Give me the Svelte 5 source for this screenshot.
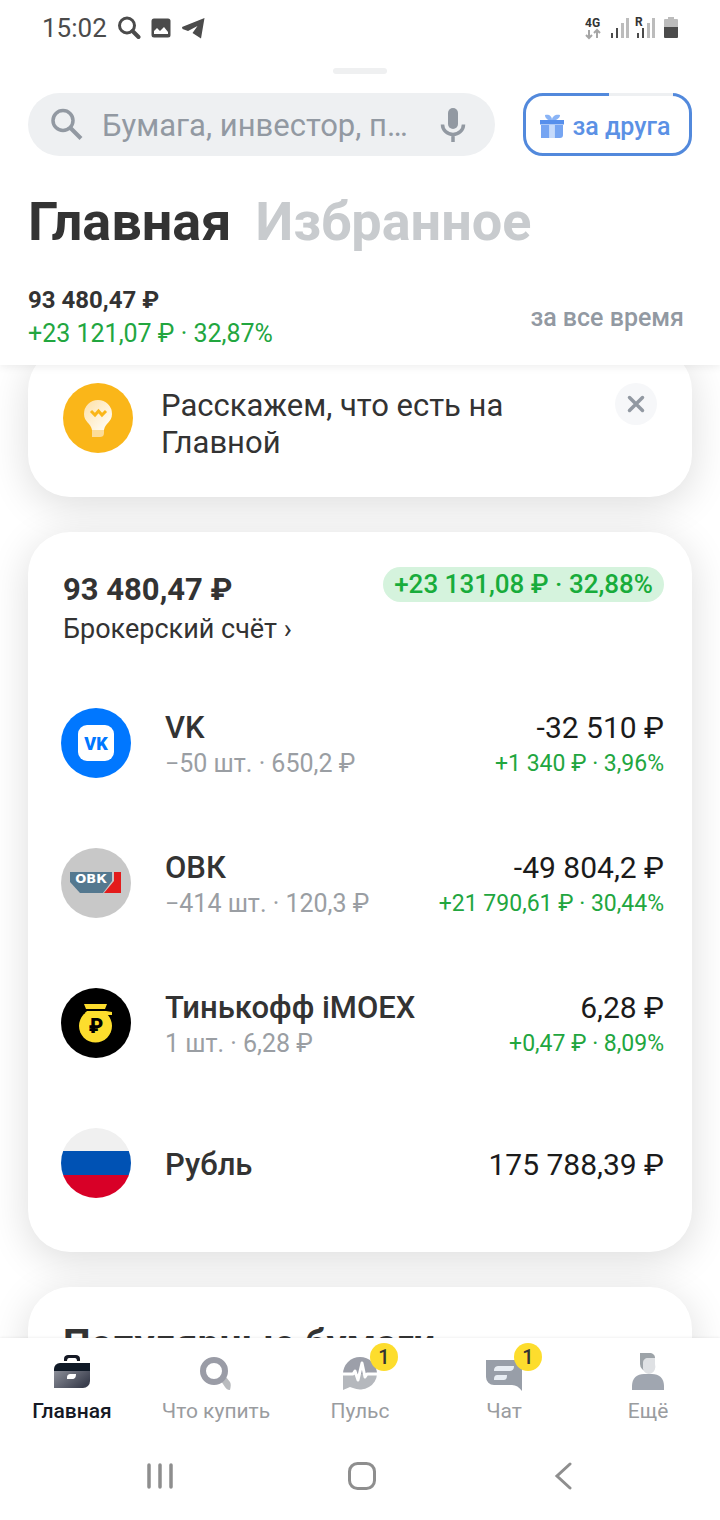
<script>
	let search = $state('');
	let hintOpen = $state(true);
	let activeTab = $state('home');

	const positions = [
		{ id: 'vk', name: 'VK', details: '−50 шт. · 650,2 ₽', value: '-32 510 ₽', profit: '+1 340 ₽ · 3,96%' },
		{ id: 'ovk', name: 'ОВК', details: '−414 шт. · 120,3 ₽', value: '-49 804,2 ₽', profit: '+21 790,61 ₽ · 30,44%' },
		{ id: 'imoex', name: 'Тинькофф iMOEX', details: '1 шт. · 6,28 ₽', value: '6,28 ₽', profit: '+0,47 ₽ · 8,09%' },
		{ id: 'rub', name: 'Рубль', value: '175 788,39 ₽' },
	];

	const tabs = [
		{ id: 'home', label: 'Главная' },
		{ id: 'buy', label: 'Что купить' },
		{ id: 'pulse', label: 'Пульс', badge: 1 },
		{ id: 'chat', label: 'Чат', badge: 1 },
		{ id: 'more', label: 'Ещё' },
	];
</script>

<div class="screen">
	<header>
		<div class="status">
			<time>15:02</time>
			<svg width="24" height="24" viewBox="0 0 24 24" fill="none" stroke="#4b4b4b">
				<circle cx="10" cy="9.500" r="7.500" stroke-width="3" />
				<path d="M15.500 15l6 6" stroke-width="4" stroke-linecap="round" />
			</svg>
			<svg class="picture" width="20" height="20" viewBox="0 0 20 20">
				<rect x="0.500" y="0.500" width="19" height="19" rx="2.500" fill="#4b4b4b" />
				<path d="M3 16v-3l3-3 3 3 4-4 4 5v2z" fill="#fff" />
			</svg>
			<svg class="plane" width="24" height="22" viewBox="0 0 24 22">
				<path d="M1 10 23.500 1 20 21.500l-8.500-5.500 5-7-9.500 5-5.500-2z" fill="#4b4b4b" />
			</svg>
			<span class="spacer"></span>
			<svg width="16" height="24" viewBox="0 0 16 24" fill="none">
				<text x="0" y="11" class="tiny">4G</text>
				<path d="M4 14v8M1 19l3 3 3-3M12 22v-8M9 17l3-3 3 3" stroke="#a6a6a6" stroke-width="2" />
			</svg>
			<svg class="signal" width="19" height="24" viewBox="0 0 19 24">
				<path d="M1 17h2v5H1zM6 12h2v10H6z" fill="#4b4b4b" />
				<path d="M11 7h3v15h-3zM16 2h3v20h-3z" fill="#bcbcbc" />
			</svg>
			<svg class="roaming" width="20" height="24" viewBox="0 0 20 24">
				<text x="0" y="10" class="tiny">R</text>
				<path d="M2 17h2v5H2zM7 12h2v10H7z" fill="#4b4b4b" />
				<path d="M12 7h3v15h-3zM17 2h3v20h-3z" fill="#bcbcbc" />
			</svg>
			<svg class="battery" width="14" height="24" viewBox="0 0 14 24">
				<path d="M4 1h6v2h3a1 1 0 0 1 1 1v7H0V4a1 1 0 0 1 1-1h3z" fill="#bcbcbc" />
				<path d="M0 11h14v10a1 1 0 0 1-1 1H1a1 1 0 0 1-1-1z" fill="#4b4b4b" />
			</svg>
		</div>
		<div class="handle"></div>

		<div class="tools">
			<label class="search">
				<svg width="34" height="34" viewBox="0 0 34 34" fill="none" stroke="#9299a2" stroke-width="3.500">
					<circle cx="13" cy="12.500" r="10" />
					<path d="M20 19.500l11 11" stroke-width="4" />
				</svg>
				<input type="text" bind:value={search} placeholder="Бумага, инвестор, п…" aria-label="Поиск" />
				<svg width="26" height="34" viewBox="0 0 26 34">
					<rect x="8" y="0" width="10" height="21" rx="5" fill="#9299a2" />
					<path d="M2.500 16.500a10.500 10 0 0 0 21 0M13 26v8" fill="none" stroke="#9299a2" stroke-width="3.500" />
				</svg>
			</label>
			<button class="invite">
				<svg width="24" height="24" viewBox="0 0 24 24">
					<path d="M12 6C9 7 5 5 5 1c4-1 7 1 7 5zM12 6c3 1 8-1 8-5-4-1-8 1-8 5z" fill="#8ab4f6" />
					<path d="M0 6h24v4.500H0z" fill="#568fec" />
					<path d="M1 11h8.500v13H1zM14.500 11H23v10a3 3 0 0 1-3 3h-5.500z" fill="#76a5f2" />
					<path d="M9.500 11h5v13h-5z" fill="#c5dafb" />
				</svg>
				за друга
			</button>
		</div>

		<h1>
			<a href="#main">Главная</a>
			<a href="#favorites" class="inactive">Избранное</a>
		</h1>

		<div class="summary">
			<div>
				<div class="total">93 480,47 ₽</div>
				<div class="gain">+23 121,07 ₽ · 32,87%</div>
			</div>
			<button class="period">за все время</button>
		</div>
	</header>

	<main>
		{#if hintOpen}
			<section class="card hint">
				<svg width="70" height="70" viewBox="0 0 70 70">
					<defs>
						<linearGradient id="bulb" x1="0" y1="0" x2="1" y2="1">
							<stop offset="0" stop-color="#fde0a5" />
							<stop offset="0.500" stop-color="#fff0d2" />
							<stop offset="1" stop-color="#fff" />
						</linearGradient>
					</defs>
					<circle cx="35" cy="35" r="35" fill="#fab619" />
					<path d="M35 17a14 14 0 0 1 14 14c0 8-7 9-8 16H29c-1-7-8-8-8-16a14 14 0 0 1 14-14z" fill="url(#bulb)" />
					<path d="M29 47h12v3c0 3-2 4-4 4h-8z" fill="#fcdc98" />
					<path d="M28 28l4 4 3.500-4 3.500 4 4-4" fill="none" stroke="#fab619" stroke-width="3" />
				</svg>
				<p>Расскажем, что есть на Главной</p>
				<button class="close" aria-label="Закрыть" onclick={() => (hintOpen = false)}>
					<svg width="18" height="18" viewBox="0 0 18 18">
						<path d="M2.500 2.500l13 13M15.500 2.500l-13 13" stroke="#9299a2" stroke-width="3.500" stroke-linecap="round" />
					</svg>
				</button>
			</section>
		{/if}

		<section class="card account">
			<div class="account-head">
				<div>
					<h2>93 480,47 ₽</h2>
					<a href="#account">Брокерский счёт ›</a>
				</div>
				<span class="pill">+23 131,08 ₽ · 32,88%</span>
			</div>

			<ul>
				{#each positions as { id, name, details, value, profit } (id)}
					<li>
						<svg width="70" height="70" viewBox="0 0 70 70">
							{#if id === 'vk'}
								<circle cx="35" cy="35" r="35" fill="#07f" />
								<rect x="17" y="17" width="36" height="36" rx="9" fill="#fff" />
								<text x="35" y="42" text-anchor="middle" class="vk">VK</text>
							{:else if id === 'ovk'}
								<circle cx="35" cy="35" r="35" fill="#c8c8c8" />
								<path d="M9 24h42v9L42 45H19L9 34z" fill="#54788f" />
								<path d="M53 24h7v21H43l10-12z" fill="#e31b1b" />
								<text x="30" y="35" text-anchor="middle" class="ovk">ОВК</text>
							{:else if id === 'imoex'}
								<circle cx="35" cy="35" r="35" />
								<path d="M23 16h23l-2 5H25zM24 25l2-2h19l6 1v3h-5l-3-1H26z" fill="#fddd2d" />
								<circle cx="34.500" cy="38" r="16.500" fill="#fddd2d" />
								<path d="M25 22h21" stroke="#000" stroke-width="2" />
								<text x="35" y="45" text-anchor="middle" class="bag">₽</text>
							{:else}
								<clipPath id="flag"><circle cx="35" cy="35" r="35" /></clipPath>
								<g clip-path="url(#flag)">
									<path d="M0 0h70v23H0z" fill="#f0f0f0" />
									<path d="M0 23h70v24H0z" fill="#0052b4" />
									<path d="M0 47h70v23H0z" fill="#d80027" />
								</g>
							{/if}
						</svg>
						<div class="info">
							<div class="name">{name}</div>
							{#if details}<div class="details">{details}</div>{/if}
						</div>
						<div class="money">
							<div class="value">{value}</div>
							{#if profit}<div class="profit">{profit}</div>{/if}
						</div>
					</li>
				{/each}
			</ul>
		</section>

		<section class="card popular">
			<h2>Популярные бумаги</h2>
		</section>
	</main>

	<footer>
		<nav class="tabs">
			{#each tabs as tab (tab.id)}
				<button class:active={activeTab === tab.id} onclick={() => (activeTab = tab.id)}>
					<span class="icon">
						<svg width="36" height="40" viewBox="0 0 36 40">
							{#if tab.id === 'home'}
								<defs>
									<linearGradient id="case" x1="0" y1="0" x2="1" y2="0.600">
										<stop offset="0" stop-color="#8b8e98" />
										<stop offset="1" stop-color="#3a3e4d" />
									</linearGradient>
								</defs>
								<path d="M10 9V7c0-3 2-4 4-4h8c2 0 4 1 4 4v2h-3c0-2-1-3-2-3h-6c-1 0-2 1-2 3z" fill="#151924" />
								<path d="M0 19h36v10a7 7 0 0 1-7 7H0z" fill="url(#case)" />
								<path d="M0 19v-2a6 6 0 0 1 6-6h30v8z" fill="#101a27" />
								<path d="M13 26c0-3 1-4 4-4h5c0 3-1 5-4 5h-5z" fill="#fff" />
							{:else if tab.id === 'buy'}
								<path d="M23 29l5-4 4 5c1 2 1 4 0 8-3 0-4-2-5-3z" fill="#b9bbbe" />
								<circle cx="16" cy="19" r="11" fill="none" stroke="#9a9ca6" stroke-width="6" />
							{:else if tab.id === 'pulse'}
								<path d="M1 22a17 17 0 0 1 34 0z" fill="#9c9fa9" />
								<path d="M1 22h34a17 16 0 0 1-24 14l-3-1-7 3z" fill="#b5b8bd" />
								<path d="M0 22h11l2-3 3 9 4-17 3 14 2-3h11" fill="none" stroke="#fff" stroke-width="3" stroke-linejoin="round" />
							{:else if tab.id === 'chat'}
								<path d="M0 8h36v31c-3-4-6-6-10-6H8a8 8 0 0 1-8-8z" fill="#989ea8" />
								<path d="M8 19c0-4 2-5 5-5h15c0 4-2 5-5 5zM8 28c0-4 1-5 4-5h9c0 4-1 5-4 5z" fill="#e8edf3" />
							{:else}
								<path d="M10 1h9c4 0 6 2 6 5v6a7 7 0 0 1-15 0z" fill="#9da3a8" />
								<path d="M13 11c0-3 2-5 5-5h7v6a6 7 0 0 1-12 5z" fill="#dfe1e4" />
								<path d="M2 38v-4c0-8 5-12 12-12h8c7 0 12 4 12 12v4z" fill="#a0a6b0" />
							{/if}
						</svg>
						{#if tab.badge}<span class="badge">{tab.badge}</span>{/if}
					</span>
					{tab.label}
				</button>
			{/each}
		</nav>

		<div class="system">
			<button aria-label="Недавние">
				<svg width="28" height="28" viewBox="0 0 28 28">
					<path d="M3 3v22M14 3v22M25 3v22" stroke="#8e8e8e" stroke-width="3.500" stroke-linecap="round" />
				</svg>
			</button>
			<button aria-label="Домой">
				<svg width="28" height="28" viewBox="0 0 28 28">
					<rect x="1.500" y="1.500" width="25" height="25" rx="8" fill="none" stroke="#8e8e8e" stroke-width="3" />
				</svg>
			</button>
			<button aria-label="Назад">
				<svg width="28" height="28" viewBox="0 0 28 28">
					<path d="M20 2L7 14l13 12" fill="none" stroke="#8e8e8e" stroke-width="3" stroke-linecap="round" />
				</svg>
			</button>
		</div>
	</footer>
</div>

<style>
	:global(body) {
		background: #fff;
	}

	.screen {
		display: flex;
		flex-direction: column;
		height: 100vh;
		overflow: hidden;
		font-family: Roboto, 'Noto Sans', sans-serif;
		color: #333;
	}

	h1, h2, p, ul {
		margin: 0;
		padding: 0;
	}

	a {
		color: inherit;
		text-decoration: none;
	}

	button {
		border: none;
		padding: 0;
		background: none;
		font-family: inherit;
		cursor: pointer;
	}

	svg {
		display: block;
		flex: none;
	}

	header {
		position: relative;
		z-index: 1;
		padding: 0 28px;
		background: #fff;
		box-shadow: 0 2px 8px rgba(0, 0, 0, 0.07);
	}

	.status {
		display: flex;
		align-items: center;
		height: 56px;
		padding: 0 14px;
		margin-bottom: 12px;
		font-size: 26px;
		color: #4b4b4b;
	}
	.status time {
		margin-right: 10px;
	}
	.picture {
		margin-left: 10px;
	}
	.plane {
		margin-left: 10px;
	}
	.spacer {
		flex: 1;
	}
	.signal {
		margin-left: 9px;
	}
	.roaming {
		margin-left: 6px;
	}
	.battery {
		margin-left: 9px;
	}
	.tiny {
		font-size: 12px;
		font-weight: 700;
		fill: #333;
	}

	.handle {
		width: 54px;
		height: 6px;
		margin: 0 auto 19px;
		border-radius: 3px;
		background: #eff0f1;
	}

	.tools {
		display: flex;
		gap: 28px;
	}
	.search {
		display: flex;
		flex: 1;
		align-items: center;
		min-width: 0;
		height: 63px;
		padding: 0 29px 0 22px;
		border-radius: 32px;
		box-sizing: border-box;
		background: #eef0f2;
	}
	.search input {
		flex: 1;
		min-width: 0;
		padding: 2px 0 0;
		margin: 0 18px;
		border: none;
		outline: none;
		background: none;
		font-family: inherit;
		font-size: 31px;
		color: #333;
	}
	.search input::placeholder {
		color: #9299a2;
		opacity: 1;
	}

	.invite {
		position: relative;
		display: flex;
		align-items: center;
		justify-content: center;
		gap: 9px;
		width: 169px;
		height: 63px;
		padding: 3px 5px 0 0;
		border: 3px solid #5289dc;
		border-radius: 20px;
		font-size: 25px;
		font-weight: 500;
		color: #5b91e5;
	}
	/* unfinished part of the progress outline */
	.invite::before {
		content: '';
		position: absolute;
		top: -3px;
		right: 16px;
		width: 64px;
		height: 3px;
		background: #eef0f2;
	}

	h1 {
		display: flex;
		gap: 24px;
		margin-top: 34px;
		font-size: 54px;
		line-height: 64px;
	}
	.inactive {
		color: #c8cbce;
	}

	.summary {
		display: flex;
		align-items: center;
		justify-content: space-between;
		padding: 29px 8px 14px 0;
	}
	.total {
		font-size: 24px;
		line-height: 34px;
		font-weight: 700;
	}
	.gain {
		font-size: 25px;
		line-height: 34px;
		color: #22a63f;
	}
	.period {
		font-size: 25px;
		font-weight: 500;
		color: #9299a2;
	}

	main {
		flex: 1;
		min-height: 0;
		padding: 0 28px;
		overflow: hidden;
	}

	.card {
		margin-bottom: 35px;
		padding: 35px;
		border-radius: 42px;
		background: #fff;
		box-shadow: 0 8px 40px rgba(0, 0, 0, 0.14);
	}

	/* scrolled a little way under the header */
	.hint {
		display: flex;
		align-items: flex-start;
		margin-top: -17px;
		padding-bottom: 36px;
	}
	.hint p {
		flex: 1;
		margin: 4px 80px 0 28px;
		font-size: 31px;
		line-height: 37px;
	}
	.close {
		display: grid;
		place-items: center;
		width: 42px;
		height: 42px;
		border-radius: 50%;
		background: #f6f7f9;
	}

	.account {
		padding: 35px 28px 54px 33px;
	}
	.account-head {
		display: flex;
		align-items: flex-start;
		justify-content: space-between;
		padding-left: 2px;
		margin-bottom: 59px;
		font-size: 26px;
	}
	.account-head h2 {
		margin-top: 4px;
		font-size: 31px;
		line-height: 38px;
	}
	.account-head a {
		font-size: 27px;
		line-height: 40px;
	}
	.pill {
		padding: 0 11px;
		border-radius: 18px;
		font-weight: 500;
		line-height: 35px;
		color: #18ac3b;
		background: #d5f3dd;
	}

	ul {
		display: grid;
		gap: 70px;
		list-style: none;
	}
	li {
		display: flex;
		align-items: center;
		height: 70px;
	}
	.info {
		flex: 1;
		margin-left: 34px;
		padding-top: 4px;
	}
	.name {
		font-size: 31px;
		line-height: 38px;
		font-weight: 500;
	}
	.details {
		font-size: 25px;
		line-height: 34px;
		color: #9a9ea3;
	}
	.money {
		padding-top: 4px;
		text-align: right;
	}
	.value {
		font-size: 30px;
		line-height: 38px;
		color: #1b1b1b;
	}
	.profit {
		font-size: 23px;
		line-height: 34px;
		color: #22a63f;
	}

	.vk {
		font-size: 18px;
		font-weight: 900;
		fill: #07f;
	}
	.ovk {
		font-family: 'DejaVu Sans', sans-serif;
		font-size: 13px;
		font-weight: 700;
		fill: #fff;
	}
	.bag {
		font-size: 20px;
		font-weight: 900;
	}

	.popular h2 {
		font-size: 39px;
		line-height: 44px;
	}

	footer {
		position: relative;
		background: #fff;
		box-shadow: 0 0 3px rgba(0, 0, 0, 0.1);
	}
	.tabs {
		display: grid;
		grid-template-columns: repeat(5, 1fr);
		padding-top: 14px;
	}
	.tabs button {
		display: flex;
		flex-direction: column;
		align-items: center;
		gap: 5px;
		font-size: 21px;
		line-height: 28px;
		color: #9a9c9f;
	}
	.tabs .active {
		font-weight: 500;
		color: #151924;
	}
	.icon {
		position: relative;
	}
	.badge {
		position: absolute;
		top: -9px;
		left: 28px;
		width: 28px;
		border-radius: 50%;
		font-size: 20px;
		font-weight: 500;
		line-height: 28px;
		color: #333;
		background: #fddd2d;
	}

	.system {
		display: flex;
		justify-content: center;
		gap: 174px;
		padding: 37px 0 30px 3px;
	}
</style>
